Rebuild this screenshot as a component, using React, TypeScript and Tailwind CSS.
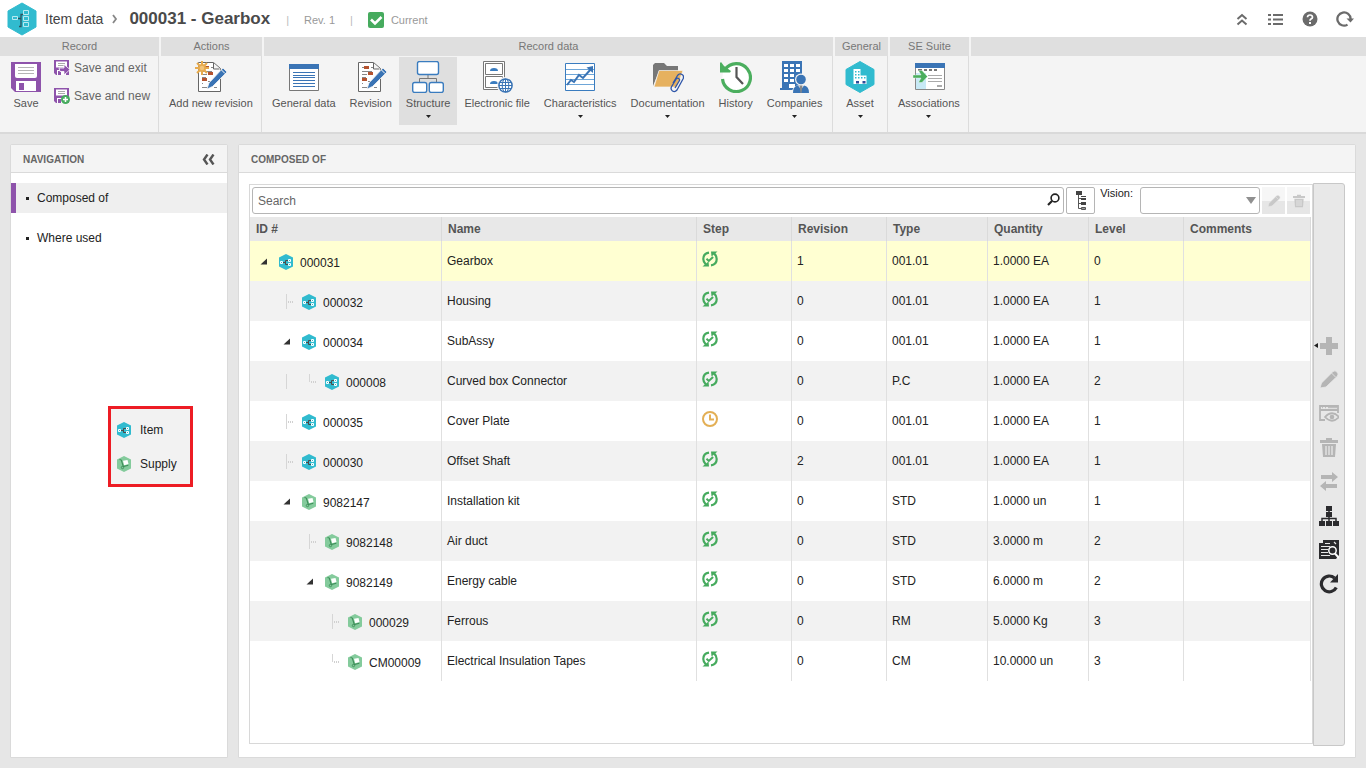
import type { ReactNode } from "react";

type Kind = "item" | "supply";
type Guide = "blank" | "line" | "tee" | "end" | "open";

interface Row {
  id: string;
  kind: Kind;
  guides: Guide[];
  name: string;
  step: "done" | "pending";
  revision: string;
  type: string;
  quantity: string;
  level: number;
}

const rows: Row[] = [
  { id: "000031", kind: "item", guides: ["open"], name: "Gearbox", step: "done", revision: "1", type: "001.01", quantity: "1.0000 EA", level: 0 },
  { id: "000032", kind: "item", guides: ["blank", "tee"], name: "Housing", step: "done", revision: "0", type: "001.01", quantity: "1.0000 EA", level: 1 },
  { id: "000034", kind: "item", guides: ["blank", "open"], name: "SubAssy", step: "done", revision: "0", type: "001.01", quantity: "1.0000 EA", level: 1 },
  { id: "000008", kind: "item", guides: ["blank", "line", "end"], name: "Curved box Connector", step: "done", revision: "0", type: "P.C", quantity: "1.0000 EA", level: 2 },
  { id: "000035", kind: "item", guides: ["blank", "tee"], name: "Cover Plate", step: "pending", revision: "0", type: "001.01", quantity: "1.0000 EA", level: 1 },
  { id: "000030", kind: "item", guides: ["blank", "tee"], name: "Offset Shaft", step: "done", revision: "2", type: "001.01", quantity: "1.0000 EA", level: 1 },
  { id: "9082147", kind: "supply", guides: ["blank", "open"], name: "Installation kit", step: "done", revision: "0", type: "STD", quantity: "1.0000 un", level: 1 },
  { id: "9082148", kind: "supply", guides: ["blank", "blank", "tee"], name: "Air duct", step: "done", revision: "0", type: "STD", quantity: "3.0000 m", level: 2 },
  { id: "9082149", kind: "supply", guides: ["blank", "blank", "open"], name: "Energy cable", step: "done", revision: "0", type: "STD", quantity: "6.0000 m", level: 2 },
  { id: "000029", kind: "supply", guides: ["blank", "blank", "blank", "tee"], name: "Ferrous", step: "done", revision: "0", type: "RM", quantity: "5.0000 Kg", level: 3 },
  { id: "CM00009", kind: "supply", guides: ["blank", "blank", "blank", "end"], name: "Electrical Insulation Tapes", step: "done", revision: "0", type: "CM", quantity: "10.0000 un", level: 3 },
];

/* ---------- Record icons ---------- */

function KindIcon({ kind }: { kind: Kind }) {
  if (kind === "item") {
    return (
      <svg width="14" height="16" viewBox="0 0 14 16" className="shrink-0" aria-hidden="true">
        <path d="M7 0l7 3.500v9L7 16l-7-3.500v-9z" fill="#31bbcf" />
        <path d="M4 8.500h3M9 6.500H6.500v4H9" fill="none" stroke="#4a4a4a" />
        <path d="M1.500 7.500h2v2h-2zM9.500 5.500h2v2h-2zM9.500 9.500h2v2h-2z" fill="#31bbcf" stroke="#fff" />
      </svg>
    );
  }
  return (
    <svg width="14" height="16" viewBox="0 0 14 16" className="shrink-0" aria-hidden="true">
      <path d="M7 0l7 3.500v9L7 16l-7-3.500v-9z" fill="#84cb9c" />
      <path d="M6 4.800l4.500-.8 1 4-4.300 1.200z" fill="#fff" />
      <path d="M2.500 3.500l1.800.6 2 6.400 5-1.300" fill="none" stroke="#3c8d58" strokeWidth="1.100" />
      <circle cx="5.500" cy="11.500" r="1.200" fill="none" stroke="#3c8d58" strokeWidth=".9" />
    </svg>
  );
}

function BigHex() {
  return (
    <svg width="30" height="34" viewBox="0 0 30 34" className="shrink-0" aria-hidden="true">
      <path d="M15 1l14 8v16l-14 8-14-8V9z" fill="#31bbcf" stroke="#31bbcf" strokeLinejoin="round" />
      <path d="M11 16.500h3M16 12.500h-2v12h-2" fill="none" stroke="#2d5560" strokeWidth="1.300" />
      <path d="M5.500 14.500h5v3h-5zM16.500 8.500h5v4h-5zM16.500 14.500h5v4h-5zM16.500 20.500h5v4h-5z" fill="none" stroke="#b9eaf1" />
    </svg>
  );
}

function StepIcon({ step }: { step: Row["step"] }) {
  if (step === "pending") {
    return (
      <svg width="16" height="16" viewBox="0 0 16 16" role="img" aria-label="Pending">
        <circle cx="8" cy="8" r="7" fill="none" stroke="#e3af55" strokeWidth="2" />
        <path d="M8 3.500V8.500h4" fill="none" stroke="#e3af55" strokeWidth="2" />
      </svg>
    );
  }
  return (
    <svg width="16" height="16" viewBox="0 0 16 16" role="img" aria-label="Done">
      <path d="M7 1.700C3 2.200 1.300 5 1.300 8q0 3.300 2.500 5.300M9 14.300c4-.5 5.700-3.300 5.700-6.300q0-3.300-2.500-5.300" fill="none" stroke="#46ab5e" strokeWidth="2.200" />
      <path d="M9 .5h6.500l-2 1.700L9.500 5.500zM7 15.500H.5l2-1.700 4-3.300z" fill="#46ab5e" />
      <path d="M4.500 7.800l2.300 2.200 4.300-4" fill="none" stroke="#46ab5e" strokeWidth="2" />
    </svg>
  );
}

function TreeGuide({ guide }: { guide: Guide }) {
  return (
    <svg width="23" height="16" viewBox="0 0 23 16" className="shrink-0" aria-hidden="true">
      {guide === "open" && <path d="M14 4.500v6H7.500z" fill="#333" />}
      {(guide === "line" || guide === "tee") && <path d="M10.500 0v15" stroke="#d6d6d6" />}
      {guide === "end" && <path d="M10.500 0v8" stroke="#d6d6d6" />}
      {(guide === "tee" || guide === "end") && <path d="M12 8h6" stroke="#d0d0d0" strokeWidth="2" strokeDasharray="1 1" />}
    </svg>
  );
}

/* ---------- Ribbon icons ---------- */

function Svg32({ children }: { children: ReactNode }) {
  return (
    <svg width="32" height="32" viewBox="0 0 32 32" aria-hidden="true" className="shrink-0">
      {children}
    </svg>
  );
}

const SaveIcon = () => (
  <Svg32>
    <path d="M1 1h30v30H5l-4-4z" fill="#8e53ab" />
    <path d="M5 3h22v12q0 2-2 2H7q-2 0-2-2z" fill="#fff" />
    <path d="M8 6.500h16M8 9.500h16M8 12.500h16" stroke="#b5b5b5" />
    <path d="M6 20h20v10H6z" fill="#fff" />
    <path d="M9 22h5v7H9z" fill="#8e53ab" />
  </Svg32>
);

function SmallDisk({ children }: { children: ReactNode }) {
  return (
    <svg width="16" height="16" viewBox="0 0 16 16" aria-hidden="true" className="shrink-0">
      <path d="M0 0h15v15H2l-2-2z" fill="#8e53ab" />
      <path d="M2 1.500h11v6H2zM3 10h9v5H3z" fill="#fff" />
      <path d="M4 3.500h7M4 5.500h7" stroke="#aaa" />
      <path d="M4 11h3v4H4z" fill="#8e53ab" />
      {children}
    </svg>
  );
}

function RevisionSheet() {
  return (
    <>
      <path d="M3.500 1.500h15l7 6v23h-22z" fill="#fff" stroke="#666" />
      <path d="M18.500 2v6h6" fill="#f4f4f4" stroke="#666" />
      <path d="M7 6.500h3M16 6.500h2M7 10.500h10M7 13.500h5M7 16.500h4M7 22.500h1M7 26.500h8M13 20.500h8M19 26.500h3" stroke="#888" />
      <path d="M9 5h5v3H9zM13 11h5v3h-5zM7 17h5v3H7z" fill="#b5532f" />
      <path d="M14 22L28 7l4 4-14.500 14.500L12 28z" fill="#3a74b5" stroke="#f4f4f4" strokeWidth=".8" />
      <path d="M26 8.500l4 4" stroke="#fff" />
    </>
  );
}

const AddRevisionIcon = () => (
  <Svg32>
    <RevisionSheet />
    <path d="M7 0v14M0 7h14M2 2l10 10M12 2L2 12" stroke="#e7ab4e" strokeWidth="2" />
    <circle cx="7" cy="7" r="4" fill="#e7ab4e" />
    <circle cx="7" cy="7" r="2.200" fill="#f2c57c" />
  </Svg32>
);

const RevisionIcon = () => (
  <Svg32>
    <RevisionSheet />
  </Svg32>
);

const GeneralIcon = () => (
  <Svg32>
    <path d="M1.500 4h29v25.500h-29z" fill="#fff" stroke="#777" />
    <path d="M1 3h30v5H1z" fill="#3a74b5" />
    <path d="M5 11.500h22M5 14.500h22M5 16.500h22M5 19.500h22M5 22.500h22M5 25.500h22" stroke="#3a74b5" />
  </Svg32>
);

const StructureIcon = () => (
  <Svg32>
    <path d="M16 14v4M7.500 21v-3.500h17V21" fill="none" stroke="#777" />
    <rect x="5.500" y=".5" width="21" height="13" rx="2" fill="#fff" stroke="#3a7cbf" strokeWidth="1.400" />
    <rect x=".7" y="21.500" width="14" height="10" rx="2" fill="#fff" stroke="#3a7cbf" strokeWidth="1.400" />
    <rect x="17.300" y="21.500" width="14" height="10" rx="2" fill="#fff" stroke="#3a7cbf" strokeWidth="1.400" />
  </Svg32>
);

const FileIcon = () => (
  <Svg32>
    <path d="M2.500 .5h21v28h-21z" fill="#fff" stroke="#777" />
    <path d="M4.500 2.500h17v11h-17zM4.500 15.500h17v11h-17z" fill="#fff" stroke="#777" />
    <path d="M9 10q0-3 4-3t4 3zM9 23q0-3 4-3t4 3z" fill="#3a7cbf" />
    <circle cx="24.500" cy="24.500" r="8.500" fill="#f4f4f4" />
    <circle cx="24.500" cy="24.500" r="6.600" fill="#fff" stroke="#3a74b5" strokeWidth="1.500" />
    <path d="M24.500 18v13M18 24.500h13M19 21.500h11M19 27.500h11" stroke="#3a74b5" />
    <ellipse cx="24.500" cy="24.500" rx="3.300" ry="6.500" fill="none" stroke="#3a74b5" />
  </Svg32>
);

const ChartIcon = () => (
  <Svg32>
    <path d="M1.500 2.500h29v27h-29z" fill="#fff" stroke="#3a7cbf" />
    <path d="M2 8.500h28M2 13.500h28M2 18.500h28M2 23.500h28" stroke="#6ea6d8" />
    <path d="M3 24l4-5 3 2 5-7 4 3 8-9" fill="none" stroke="#3a74b5" strokeWidth="2" />
    <path d="M29 5v7L22.500 6.500z" fill="#3a74b5" />
  </Svg32>
);

const FolderIcon = () => (
  <Svg32>
    <path d="M1 25V4l2-2h9l3 3h11v5H7z" fill="#777" />
    <path d="M7 9.500h24L25 26H2z" fill="#e6b15f" stroke="#f4f4f4" strokeWidth=".7" />
    <path d="M20 21l4.500-7.500q2-2.500 4.500-1 2.500 1.500 1 4.500L24 28q-2 2.500-4.500 1-2.300-1.600-1-4.300l4.700-7.700q1-1.500 2.500-.5 1.500 1 .5 2.500L22 26" fill="none" stroke="#2d55a8" strokeWidth="1.300" transform="translate(1 1)" />
  </Svg32>
);

const HistoryIcon = () => (
  <Svg32>
    <circle cx="16.500" cy="16" r="14" fill="#fff" />
    <path d="M5 8.500A14 14 0 1 1 2.500 18" fill="none" stroke="#4bae5e" strokeWidth="3.200" />
    <path d="M0 2l1-1 3 4 7 5-1 1.500H0z" fill="#4bae5e" />
    <path d="M16.500 6v10l6.500 7" fill="none" stroke="#555" strokeWidth="2.200" />
  </Svg32>
);

const CompaniesIcon = () => (
  <Svg32>
    <path d="M3 0h20v27h3v2H1v-2h2z" fill="#3a74b5" />
    <path d="M5 3h4v3H5zM11 3h4v3h-4zM17 3h4v3h-4zM5 8h4v3H5zM11 8h4v3h-4zM17 8h4v3h-4zM5 13h4v3H5zM11 13h4v3h-4zM5 18h4v3H5zM11 18h4v3h-4zM10 23h6v4h-6z" fill="#fff" />
    <circle cx="22" cy="18.500" r="6" fill="#f4f4f4" />
    <path d="M13 32q0-8 9-8t9 8z" fill="#f4f4f4" />
    <circle cx="22" cy="18.500" r="4.800" fill="#3a74b5" />
    <path d="M14 32q0-7 5-7.500l3 4 3-4q5 .5 5 7.500z" fill="#3a74b5" />
    <path d="M20.500 24.500h3L22.500 32h-1z" fill="#888" />
  </Svg32>
);

const AssetIcon = () => (
  <Svg32>
    <path d="M16 .5l14 8v15l-14 8-14-8v-15z" fill="#31bbcf" stroke="#31bbcf" strokeLinejoin="round" />
    <path d="M9.500 8h7v6.500h6V23h-13z" fill="#fff" />
    <path d="M11 10h1.500v1.500H11zM14 10h1.500v1.500H14zM11 13h1.500v1.500H11zM14 13h1.500v1.500H14zM11 16h1.500v1.500H11zM14 16h1.500v1.500H14zM17 16h1.500v1.500H17zM20 16h1.500v1.500H20z" fill="#31bbcf" />
    <path d="M12 20h3v2.500h-3zM18.500 20h3v2.500h-3z" fill="#2d4d9a" />
  </Svg32>
);

const AssociationsIcon = () => (
  <Svg32>
    <path d="M2.500 3.500h29v25h-29z" fill="#fff" stroke="#888" />
    <path d="M2 2h30v5H2z" fill="#3a74b5" />
    <path d="M5 9h4M11 9h3M16 9h3M21 9h3" stroke="#777" strokeWidth="2" />
    <path d="M3 12h10v16H3z" fill="#c7e9f6" />
    <path d="M15 14.500h14M15 17.500h14M15 20.500h14" stroke="#aaa" />
    <path d="M24 25h5" stroke="#aaa" strokeWidth="2" />
    <path d="M0 14h8L5.500 9.500H9l5.500 6L9 21.500H5.500L8 17H0z" fill="#4bae5e" stroke="#fff" strokeWidth=".4" />
  </Svg32>
);

/* ---------- Ribbon ---------- */

function RibbonButton({ icon, label, menu, active }: { icon: ReactNode; label: string; menu?: boolean; active?: boolean }) {
  return (
    <button
      type="button"
      className={`flex h-[68px] shrink-0 flex-col items-center px-[7px] pt-1 text-[11px] leading-[14px] whitespace-nowrap text-[#555] ${active ? "bg-[#dfdfdf]" : ""}`}
    >
      {icon}
      <span className="mt-[3px]">{label}</span>
      {menu && (
        <svg width="5" height="3" viewBox="0 0 5 3" className="mt-[5px]" aria-hidden="true">
          <path d="M0 0h5L2.500 3z" fill="#222" />
        </svg>
      )}
    </button>
  );
}

function RibbonGroup({ title, className, children }: { title: string; className: string; children: ReactNode }) {
  return (
    <section className={`flex shrink-0 flex-col pr-[2px] ${className}`}>
      <h2 className="h-[19px] bg-[#dfdfdf] text-center text-[11px] leading-[19px] text-[#777]">{title}</h2>
      <div className="flex flex-1 border-r border-[#dcdcdc] pt-px pl-px">{children}</div>
    </section>
  );
}

function Ribbon() {
  return (
    <div className="flex h-[97px] border-b-2 border-[#d9d9d9] bg-[#f4f4f4]">
      <RibbonGroup title="Record" className="w-[161px]">
        <div className="flex pl-[2px]">
          <RibbonButton icon={<SaveIcon />} label="Save" />
        </div>
        <div className="flex flex-col gap-3 pt-[3px] pl-[5px] text-[12px] leading-4 text-[#666]">
          <button type="button" className="flex items-center gap-1 whitespace-nowrap">
            <SmallDisk>
              <path d="M5 8h5V4.500L16 9.500 10 15v-3.500H6z" fill="#8e53ab" stroke="#fff" strokeWidth=".8" />
            </SmallDisk>
            Save and exit
          </button>
          <button type="button" className="flex items-center gap-1 whitespace-nowrap">
            <SmallDisk>
              <circle cx="11.500" cy="11.500" r="4.500" fill="#46ab5e" />
              <path d="M11.500 9v5M9 11.500h5" stroke="#fff" strokeWidth="1.500" />
            </SmallDisk>
            Save and new
          </button>
        </div>
      </RibbonGroup>
      <RibbonGroup title="Actions" className="w-[103px]">
        <RibbonButton icon={<AddRevisionIcon />} label="Add new revision" />
      </RibbonGroup>
      <RibbonGroup title="Record data" className="w-[571px]">
        <RibbonButton icon={<GeneralIcon />} label="General data" />
        <RibbonButton icon={<RevisionIcon />} label="Revision" />
        <RibbonButton icon={<StructureIcon />} label="Structure" menu active />
        <RibbonButton icon={<FileIcon />} label="Electronic file" />
        <RibbonButton icon={<ChartIcon />} label="Characteristics" menu />
        <RibbonButton icon={<FolderIcon />} label="Documentation" menu />
        <RibbonButton icon={<HistoryIcon />} label="History" />
        <RibbonButton icon={<CompaniesIcon />} label="Companies" menu />
      </RibbonGroup>
      <RibbonGroup title="General" className="w-[55px]">
        <div className="flex pl-px">
          <RibbonButton icon={<AssetIcon />} label="Asset" menu />
        </div>
      </RibbonGroup>
      <RibbonGroup title="SE Suite" className="w-[81px]">
        <RibbonButton icon={<AssociationsIcon />} label="Associations" menu />
      </RibbonGroup>
      <div className="h-[19px] flex-1 bg-[#dfdfdf]" />
    </div>
  );
}

/* ---------- Header ---------- */

function Header() {
  return (
    <header className="flex h-[37px] items-center bg-white pr-3 pl-[7px] text-[#555]">
      <BigHex />
      <span className="ml-2 pt-px text-[14px] text-[#444]">Item data</span>
      <svg width="6" height="10" viewBox="0 0 6 10" className="ml-[9px]" aria-hidden="true">
        <path d="M1 1l3 4-3 4" fill="none" stroke="#888" strokeWidth="1.800" />
      </svg>
      <h1 className="ml-[11px] text-[17px] font-bold text-[#4a4a4a]">000031 - Gearbox</h1>
      <div className="flex items-center pt-[3px] text-[11px] text-[#999]">
        <span className="ml-4 text-[#bbb]">|</span>
        <span className="ml-[15px]">Rev. 1</span>
        <span className="ml-[15px] text-[#bbb]">|</span>
        <svg width="16" height="16" viewBox="0 0 16 16" className="mr-[7px] ml-[15px]" aria-hidden="true">
          <rect width="16" height="16" rx="2" fill="#46ab5e" />
          <path d="M3 7.500l4 4L13.500 5" fill="none" stroke="#fff" strokeWidth="2.600" />
        </svg>
        <span>Current</span>
      </div>
      <nav className="ml-auto flex items-center gap-[18px] text-[#6b6b6b]">
        <button type="button" aria-label="Collapse ribbon">
          <svg width="16" height="16" viewBox="0 0 16 16" fill="none" stroke="currentColor" strokeWidth="2">
            <path d="M3.500 8L8 4l4.500 4M3.500 13.500L8 9.500l4.500 4" />
          </svg>
        </button>
        <button type="button" aria-label="List">
          <svg width="16" height="16" viewBox="0 0 16 16" stroke="currentColor" strokeWidth="2">
            <path d="M0 4h3M5 4h10M0 8.500h3M5 8.500h10M0 13h3M5 13h10" />
          </svg>
        </button>
        <button type="button" aria-label="Help">
          <svg width="16" height="16" viewBox="0 0 16 16">
            <circle cx="8" cy="8" r="7.500" fill="currentColor" />
            <path d="M5.500 6.300Q5.600 4 8 4t2.500 2.200Q10.500 7.300 9 8.100 8 8.700 8 9.700" fill="none" stroke="#fff" strokeWidth="1.700" />
            <path d="M7 11h2v2H7z" fill="#fff" />
          </svg>
        </button>
        <button type="button" aria-label="Reload">
          <svg width="18" height="16" viewBox="0 0 18 16">
            <path d="M11.500 13.600A6.600 6.600 0 1 1 14.600 8" fill="none" stroke="currentColor" strokeWidth="2.300" />
            <path d="M10.500 7.500H18l-3.500 4z" fill="currentColor" />
          </svg>
        </button>
      </nav>
    </header>
  );
}

/* ---------- Navigation ---------- */

function NavLink({ label, active }: { label: string; active?: boolean }) {
  return (
    <a
      href="#"
      className={`flex h-[30px] items-center border-l-[5px] pl-[10px] text-[12px] text-[#222] ${active ? "border-[#8e53ab] bg-[#efefef]" : "border-transparent"}`}
    >
      <span className="mr-2 size-[3px] bg-[#222]" />
      {label}
    </a>
  );
}

function Navigation() {
  return (
    <aside className="relative w-[218px] shrink-0 rounded-t-[2px] border border-[#dadada] bg-white">
      <div className="flex h-7 items-center justify-between border-b border-[#dadada] bg-[#f4f4f4] px-3 pt-[2px]">
        <h2 className="text-[10px] font-bold text-[#666]">NAVIGATION</h2>
        <button type="button" aria-label="Collapse navigation">
          <svg width="13" height="11" viewBox="0 0 13 11" fill="none" stroke="#555" strokeWidth="2.400">
            <path d="M5.500 .5L2 5.500l3.500 5M11.500 .5L8 5.500l3.500 5" />
          </svg>
        </button>
      </div>
      <nav className="flex flex-col gap-[10px] pt-[10px]">
        <NavLink label="Composed of" active />
        <NavLink label="Where used" />
      </nav>
      <ul className="absolute top-[261px] left-[97px] flex w-[85px] flex-col gap-[18px] border-[3px] border-[#ed1c24] bg-[#f2f2f2] pt-[13px] pb-3 pl-[6px] text-[12px] leading-4 text-[#222]">
        <li className="flex items-center gap-[9px]">
          <KindIcon kind="item" />
          Item
        </li>
        <li className="flex items-center gap-[9px]">
          <KindIcon kind="supply" />
          Supply
        </li>
      </ul>
    </aside>
  );
}

/* ---------- Table ---------- */

function PencilShape() {
  return <path d="M1 19l1.500-5L14 2.500Q16 1 18 3t.5 4L7 18zM12.500 4l4 4" fill="currentColor" stroke="#e8e8e8" strokeWidth=".8" />;
}

function TrashShape() {
  return (
    <>
      <path d="M1 3h18v3H1zM7 1h6v2H7z" fill="currentColor" />
      <path d="M3 7h14l-1 13H4z" fill="currentColor" />
      <path d="M7 9v9M10 9v9M13 9v9" stroke="#e8e8e8" strokeWidth="1.300" />
    </>
  );
}

function SearchBar() {
  return (
    <div className="flex h-8 items-start gap-[2px] pt-[2px] pr-px pl-[2px]">
      <div className="relative flex-1">
        <input
          type="text"
          aria-label="Search"
          placeholder="Search"
          className="block h-[27px] w-full rounded-[3px] border border-[#b5b5b5] bg-white px-[5px] text-[12px] text-[#222] placeholder:text-[#666]"
        />
        <svg width="13" height="13" viewBox="0 0 13 13" className="absolute top-[6px] right-1" fill="none" stroke="#222" aria-hidden="true">
          <circle cx="8" cy="5" r="3.900" strokeWidth="1.600" />
          <path d="M5 8L1 12" strokeWidth="2.200" />
        </svg>
      </div>
      <button type="button" aria-label="Tree view" className="flex h-[27px] w-[29px] items-center justify-center rounded-[2px] border border-[#b5b5b5] bg-white">
        <svg width="12" height="19" viewBox="0 0 12 19" aria-hidden="true">
          <path d="M3.500 3v14.500H6M3.500 7.500H6M3.500 12.500H6" fill="none" stroke="#555" />
          <path d="M1 0h6v4H1zM6 5h5v1H6zM6 7h5v2H6zM6 11h5v3H6z" fill="#444" />
          <path d="M6.500 16.500h4v2h-4z" fill="#999" stroke="#555" />
        </svg>
      </button>
      <label htmlFor="vision" className="ml-[3px] text-[11px] leading-[13px] text-[#222]">
        Vision:
      </label>
      <div className="relative ml-[5px] w-[120px]">
        <select id="vision" className="block h-[27px] w-full appearance-none rounded-[3px] border border-[#b5b5b5] bg-white text-[12px]">
          <option value="" />
        </select>
        <svg width="10" height="7" viewBox="0 0 10 7" className="pointer-events-none absolute top-[10px] right-1" aria-hidden="true">
          <path d="M0 0h10L5 7z" fill="#909090" />
        </svg>
      </div>
      <div className="flex gap-[2px]">
        <button type="button" aria-label="Edit vision" className="flex h-[27px] w-[23px] items-center justify-center bg-gradient-to-b from-[#f6f6f6] from-50% to-[#e6e6e6] to-50% text-[#c8c8c8]">
          <svg width="14" height="14" viewBox="0 0 20 21">
            <PencilShape />
          </svg>
        </button>
        <button type="button" aria-label="Delete vision" className="flex h-[27px] w-[23px] items-center justify-center bg-gradient-to-b from-[#f6f6f6] from-50% to-[#e6e6e6] to-50% text-[#c8c8c8]">
          <svg width="14" height="14" viewBox="0 0 20 21">
            <TrashShape />
          </svg>
        </button>
      </div>
    </div>
  );
}

const cell = "border-r border-[#e0e0e0] pl-[5px] pb-px";
const head = "border-r border-[#dadada] pl-[6px] text-left font-bold";

function StructureTable() {
  return (
    <table className="w-full table-fixed border-separate border-spacing-0 text-[12px] text-[#222]">
      <colgroup>
        <col className="w-[192px]" />
        <col className="w-[255px]" />
        <col className="w-[95px]" />
        <col className="w-[95px]" />
        <col className="w-[101px]" />
        <col className="w-[101px]" />
        <col className="w-[95px]" />
        <col />
      </colgroup>
      <thead>
        <tr className="h-6 bg-[#e8e8e8] text-[#555]">
          <th className={head}>ID #</th>
          <th className={head}>Name</th>
          <th className={head}>Step</th>
          <th className={head}>Revision</th>
          <th className={head}>Type</th>
          <th className={head}>Quantity</th>
          <th className={head}>Level</th>
          <th className={head}>Comments</th>
        </tr>
      </thead>
      <tbody>
        {rows.map((row, index) => (
          <tr key={row.id} className={`h-10 ${index === 0 ? "bg-[#ffffd2]" : index % 2 ? "bg-[#f2f2f2]" : "bg-white"}`}>
            <td className="border-r border-[#e0e0e0] pt-[3px] pl-[3px]">
              <div className="flex items-center">
                <span className="mr-[7px] flex items-center gap-[3px] pb-[2px]">
                  <span className="flex">
                    {row.guides.map((guide, i) => (
                      <TreeGuide key={i} guide={guide} />
                    ))}
                  </span>
                  <KindIcon kind={row.kind} />
                </span>
                {row.id}
              </div>
            </td>
            <td className={cell}>{row.name}</td>
            <td className="border-r border-[#e0e0e0] pb-1 pl-[5px]">
              <span className="flex">
                <StepIcon step={row.step} />
              </span>
            </td>
            <td className={cell}>{row.revision}</td>
            <td className={cell}>{row.type}</td>
            <td className={cell}>{row.quantity}</td>
            <td className={cell}>{row.level}</td>
            <td className={cell} />
          </tr>
        ))}
      </tbody>
    </table>
  );
}

function ToolButton({ label, dark, children }: { label: string; dark?: boolean; children: ReactNode }) {
  return (
    <button type="button" aria-label={label} className={`relative flex h-[34px] w-full shrink-0 items-center justify-center ${dark ? "text-[#2b2b2e]" : "text-[#b5b5b5]"}`}>
      <svg width="20" height="21" viewBox="0 0 20 21">
        {children}
      </svg>
      {label === "Add" && (
        <svg width="4" height="5" viewBox="0 0 4 5" className="absolute top-[14px] left-0" aria-hidden="true">
          <path d="M4 0v5L0 2.500z" fill="#222" />
        </svg>
      )}
    </button>
  );
}

function SideToolbar() {
  return (
    <div className="flex w-8 shrink-0 flex-col items-center justify-center rounded-r-[3px] border border-[#c8c8c8] bg-[#e8e8e8]">
      <ToolButton label="Add">
        <path d="M7 2h6v6h6v6h-6v6H7v-6H1V8h6z" fill="currentColor" />
      </ToolButton>
      <ToolButton label="Edit">
        <PencilShape />
      </ToolButton>
      <ToolButton label="View">
        <path d="M6 17H1V3h18v7M1 7h18" fill="none" stroke="currentColor" strokeWidth="1.800" />
        <path d="M3 4.700h1M6 4.700h1M9 4.700h9" stroke="currentColor" />
        <path d="M6 14q7-7.500 14 0-7 7.500-14 0z" fill="#e8e8e8" stroke="currentColor" strokeWidth="1.800" />
        <circle cx="13" cy="14" r="2.300" fill="currentColor" />
      </ToolButton>
      <ToolButton label="Delete">
        <TrashShape />
      </ToolButton>
      <ToolButton label="Replace">
        <path d="M2 4h11V1l6 5-6 5V8H2zM18 13H7v-3l-6 5 6 5v-3h11z" fill="currentColor" />
      </ToolButton>
      <ToolButton label="Hierarchy" dark>
        <path d="M7 1h6v5H7zM7 7h6v5H7zM0 16h6v5H0zM7 16h6v5H7zM14 16h6v5h-6z" fill="currentColor" />
        <path d="M10 5v11M3 16v-2.500h14V16" fill="none" stroke="currentColor" strokeWidth="1.500" />
      </ToolButton>
      <ToolButton label="Inspect" dark>
        <path d="M0 4h4V1h16v15l-3 4H0z" fill="currentColor" />
        <path d="M2 7.500h9M2 10.500h7M2 13.500h7M2 16.500h9M6 4.500h5M15 3l2 2" stroke="#e8e8e8" strokeWidth="1.200" />
        <circle cx="13.500" cy="11.500" r="3.700" fill="#2b2b2e" stroke="#fff" strokeWidth="1.500" />
        <path d="M16 14.500l4 4.500" stroke="#fff" strokeWidth="2" />
      </ToolButton>
      <ToolButton label="Refresh" dark>
        <path d="M17.300 14.500A7.900 7.900 0 1 1 15.500 5" fill="none" stroke="currentColor" strokeWidth="3.200" />
        <path d="M19 1v8.500h-8z" fill="currentColor" />
      </ToolButton>
    </div>
  );
}

export default function App() {
  return (
    <div className="flex min-h-screen flex-col bg-[#e6e6e6] font-['Liberation_Sans',Arial,sans-serif]">
      <Header />
      <Ribbon />
      <div className="flex flex-1 gap-[10px] p-[10px]">
        <Navigation />
        <main className="flex min-w-0 flex-1 flex-col rounded-t-[2px] border border-[#dadada] bg-white">
          <div className="flex h-7 shrink-0 items-center border-b border-[#dadada] bg-[#f4f4f4] pt-[2px] pl-3">
            <h2 className="text-[10px] font-bold text-[#666]">COMPOSED OF</h2>
          </div>
          <div className="flex flex-1 px-[10px] pt-[10px] pb-[11px]">
            <div className="mt-px mb-[2px] min-w-0 flex-1 border border-[#d8d8d8] pr-px">
              <SearchBar />
              <StructureTable />
            </div>
            <SideToolbar />
          </div>
        </main>
      </div>
    </div>
  );
}
